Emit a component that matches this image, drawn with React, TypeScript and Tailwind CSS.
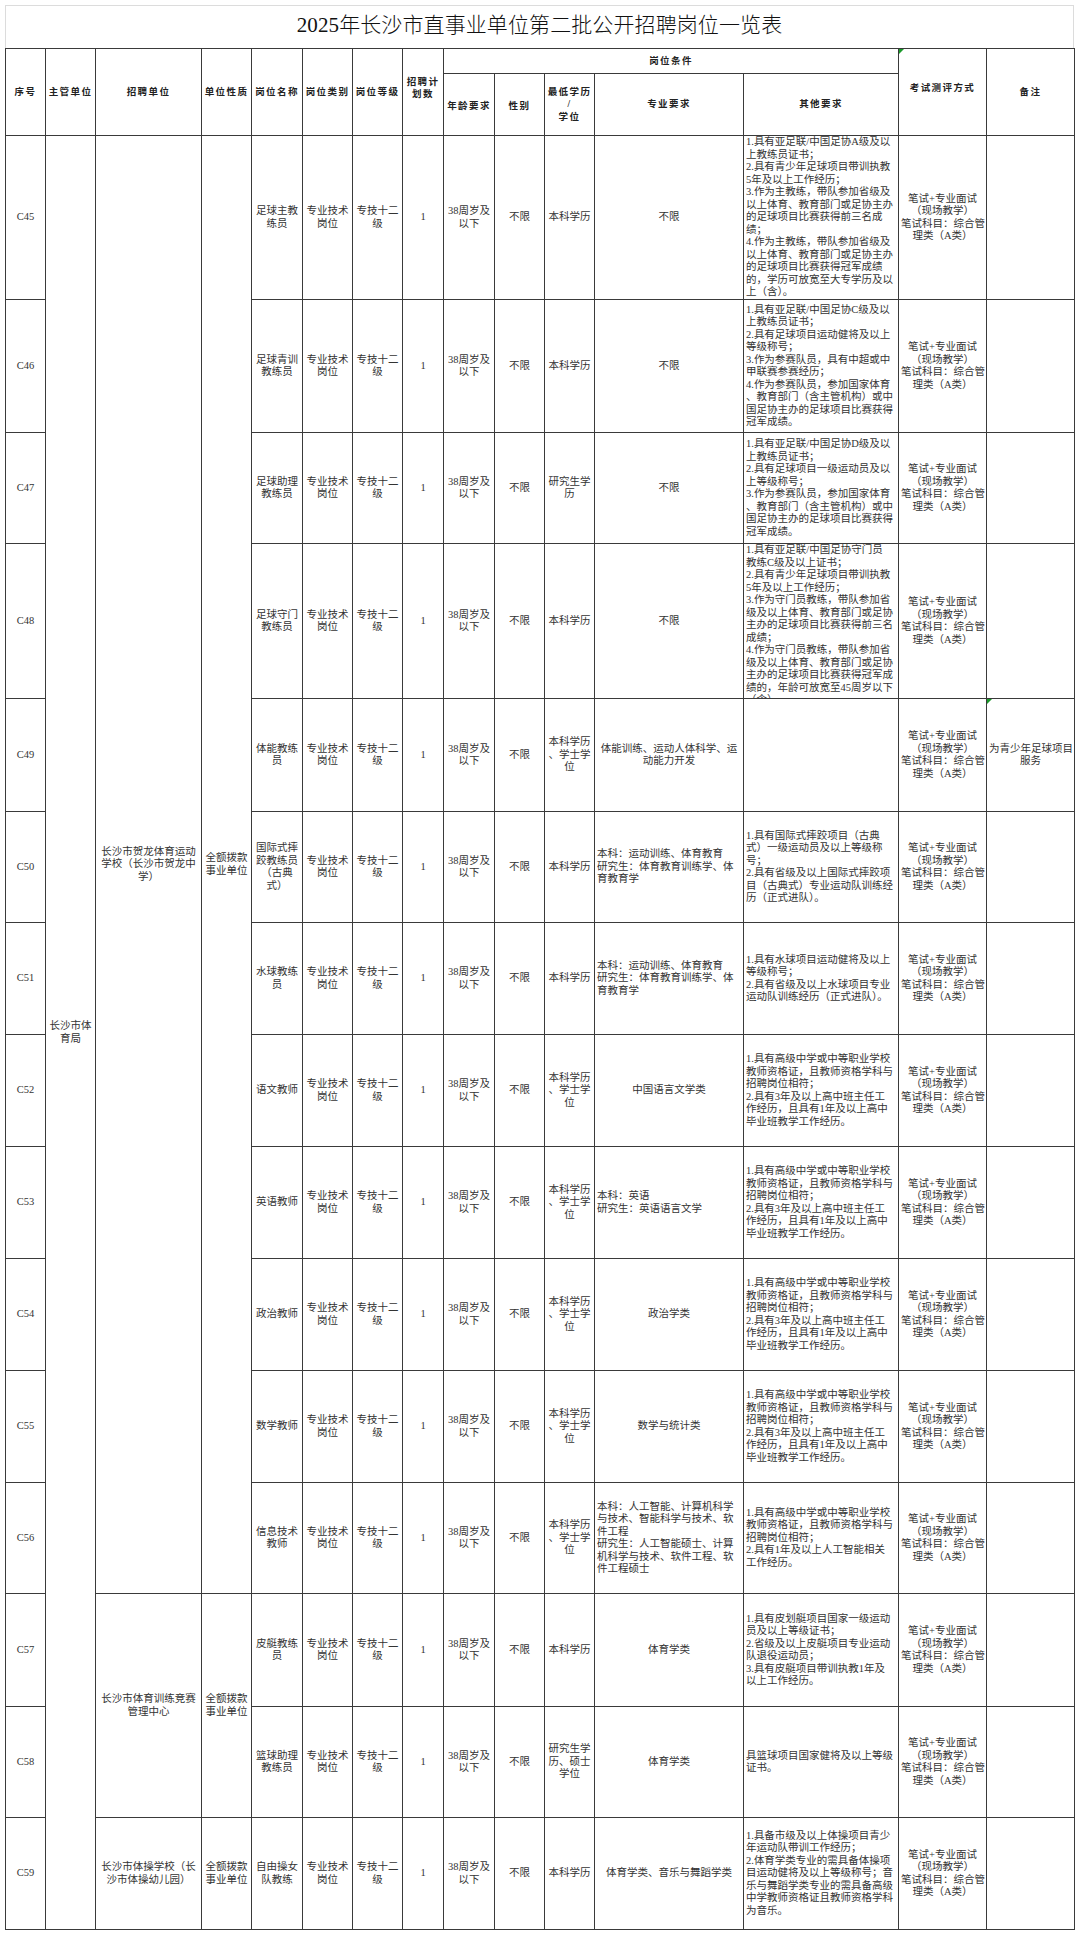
const stdOther = [
  "1.具有高级中学或中等职业学校",
  "教师资格证，且教师资格学科与",
  "招聘岗位相符；",
  "2.具有3年及以上高中班主任工",
  "作经历，且具有1年及以上高中",
  "毕业班教学工作经历。",
];

const sportMajor = "本科：运动训练、体育教育\n研究生：体育教育训练学、体\n育教育学";

type Row = {
  id: string;
  h: string;
  name: string;
  edu: string;
  major: string;
  majorLeft?: boolean;
  other: string[];
  note?: string;
  flag?: boolean;
};

const rows: Row[] = [
  {
    id: "C45",
    h: "h-[163px]",
    name: "足球主教\n练员",
    edu: "本科学历",
    major: "不限",
    other: [
      "1.具有亚足联/中国足协A级及以",
      "上教练员证书；",
      "2.具有青少年足球项目带训执教",
      "5年及以上工作经历；",
      "3.作为主教练，带队参加省级及",
      "以上体育、教育部门或足协主办",
      "的足球项目比赛获得前三名成",
      "绩；",
      "4.作为主教练，带队参加省级及",
      "以上体育、教育部门或足协主办",
      "的足球项目比赛获得冠军成绩",
      "的，学历可放宽至大专学历及以",
      "上（含）。",
    ],
  },
  {
    id: "C46",
    h: "h-[132px]",
    name: "足球青训\n教练员",
    edu: "本科学历",
    major: "不限",
    other: [
      "1.具有亚足联/中国足协C级及以",
      "上教练员证书；",
      "2.具有足球项目运动健将及以上",
      "等级称号；",
      "3.作为参赛队员，具有中超或中",
      "甲联赛参赛经历；",
      "4.作为参赛队员，参加国家体育",
      "、教育部门（含主管机构）或中",
      "国足协主办的足球项目比赛获得",
      "冠军成绩。",
    ],
  },
  {
    id: "C47",
    h: "h-[110px]",
    name: "足球助理\n教练员",
    edu: "研究生学\n历",
    major: "不限",
    other: [
      "1.具有亚足联/中国足协D级及以",
      "上教练员证书；",
      "2.具有足球项目一级运动员及以",
      "上等级称号；",
      "3.作为参赛队员，参加国家体育",
      "、教育部门（含主管机构）或中",
      "国足协主办的足球项目比赛获得",
      "冠军成绩。",
    ],
  },
  {
    id: "C48",
    h: "h-[154px]",
    name: "足球守门\n教练员",
    edu: "本科学历",
    major: "不限",
    other: [
      "1.具有亚足联/中国足协守门员",
      "教练C级及以上证书；",
      "2.具有青少年足球项目带训执教",
      "5年及以上工作经历；",
      "3.作为守门员教练，带队参加省",
      "级及以上体育、教育部门或足协",
      "主办的足球项目比赛获得前三名",
      "成绩；",
      "4.作为守门员教练，带队参加省",
      "级及以上体育、教育部门或足协",
      "主办的足球项目比赛获得冠军成",
      "绩的，年龄可放宽至45周岁以下",
      "（含）。",
    ],
  },
  {
    id: "C49",
    h: "h-[112px]",
    name: "体能教练\n员",
    edu: "本科学历\n、学士学\n位",
    major: "体能训练、运动人体科学、运\n动能力开发",
    other: [],
    note: "为青少年足球项目\n服务",
    flag: true,
  },
  {
    id: "C50",
    h: "h-[110px]",
    name: "国际式摔\n跤教练员\n（古典\n式）",
    edu: "本科学历",
    major: sportMajor,
    majorLeft: true,
    other: [
      "1.具有国际式摔跤项目（古典",
      "式）一级运动员及以上等级称",
      "号；",
      "2.具有省级及以上国际式摔跤项",
      "目（古典式）专业运动队训练经",
      "历（正式进队）。",
    ],
  },
  {
    id: "C51",
    h: "h-[111px]",
    name: "水球教练\n员",
    edu: "本科学历",
    major: sportMajor,
    majorLeft: true,
    other: [
      "1.具有水球项目运动健将及以上",
      "等级称号；",
      "2.具有省级及以上水球项目专业",
      "运动队训练经历（正式进队）。",
    ],
  },
  {
    id: "C52",
    h: "h-[111px]",
    name: "语文教师",
    edu: "本科学历\n、学士学\n位",
    major: "中国语言文学类",
    other: stdOther,
  },
  {
    id: "C53",
    h: "h-[111px]",
    name: "英语教师",
    edu: "本科学历\n、学士学\n位",
    major: "本科：英语\n研究生：英语语言文学",
    majorLeft: true,
    other: stdOther,
  },
  {
    id: "C54",
    h: "h-[111px]",
    name: "政治教师",
    edu: "本科学历\n、学士学\n位",
    major: "政治学类",
    other: stdOther,
  },
  {
    id: "C55",
    h: "h-[111px]",
    name: "数学教师",
    edu: "本科学历\n、学士学\n位",
    major: "数学与统计类",
    other: stdOther,
  },
  {
    id: "C56",
    h: "h-[110px]",
    name: "信息技术\n教师",
    edu: "本科学历\n、学士学\n位",
    major:
      "本科：人工智能、计算机科学\n与技术、智能科学与技术、软\n件工程\n研究生：人工智能硕士、计算\n机科学与技术、软件工程、软\n件工程硕士",
    majorLeft: true,
    other: [
      "1.具有高级中学或中等职业学校",
      "教师资格证，且教师资格学科与",
      "招聘岗位相符；",
      "2.具有1年及以上人工智能相关",
      "工作经历。",
    ],
  },
  {
    id: "C57",
    h: "h-[112px]",
    name: "皮艇教练\n员",
    edu: "本科学历",
    major: "体育学类",
    other: [
      "1.具有皮划艇项目国家一级运动",
      "员及以上等级证书；",
      "2.省级及以上皮艇项目专业运动",
      "队退役运动员；",
      "3.具有皮艇项目带训执教1年及",
      "以上工作经历。",
    ],
  },
  {
    id: "C58",
    h: "h-[110px]",
    name: "篮球助理\n教练员",
    edu: "研究生学\n历、硕士\n学位",
    major: "体育学类",
    other: ["具篮球项目国家健将及以上等级", "证书。"],
  },
  {
    id: "C59",
    h: "h-[111px]",
    name: "自由操女\n队教练",
    edu: "本科学历",
    major: "体育学类、音乐与舞蹈学类",
    other: [
      "1.具备市级及以上体操项目青少",
      "年运动队带训工作经历；",
      "2.体育学类专业的需具备体操项",
      "目运动健将及以上等级称号；音",
      "乐与舞蹈学类专业的需具备高级",
      "中学教师资格证且教师资格学科",
      "为音乐。",
    ],
  },
];

const units: Record<number, { span: number; name: string }> = {
  0: { span: 12, name: "长沙市贺龙体育运动\n学校（长沙市贺龙中\n学）" },
  12: { span: 2, name: "长沙市体育训练竞赛\n管理中心" },
  14: { span: 1, name: "长沙市体操学校（长\n沙市体操幼儿园）" },
};

const td = "border border-[#3a3a3a] p-0 align-middle";
const th =
  "border border-[#3a3a3a] p-0 align-middle text-center font-semibold text-[9.5px] tracking-[1.4px] text-[#222] whitespace-pre";

function Cell({ h, text, left }: { h: string; text: string; left?: boolean }) {
  return (
    <td className={td}>
      <div className={`${h} flex flex-col overflow-hidden px-[2px]`}>
        <div className={`my-auto whitespace-pre ${left ? "text-left" : "text-center"}`}>{text}</div>
      </div>
    </td>
  );
}

function Flag() {
  return (
    <span className="absolute left-0 top-0 h-0 w-0 border-t-[5px] border-r-[5px] border-t-[#1a9a2a] border-r-transparent" />
  );
}

export default function App() {
  return (
    <div className="min-h-[1935px] w-[1080px] bg-white pl-[5px] pt-[5px] font-['Liberation_Serif','Noto_Sans_CJK_SC',serif] text-[#333]">
      <div className="flex h-[43px] w-[1069px] items-center justify-center border border-b-0 border-[#dcdcdc] pb-[2px] text-[21px] font-light tracking-[0.1px] text-[#111]">
        2025年长沙市直事业单位第二批公开招聘岗位一览表
      </div>
      <table className="w-[1069px] table-fixed border-collapse text-[10.5px] leading-[12.5px]">
        <colgroup>
          <col className="w-[40px]" />
          <col className="w-[50px]" />
          <col className="w-[106px]" />
          <col className="w-[50px]" />
          <col className="w-[51px]" />
          <col className="w-[50px]" />
          <col className="w-[50px]" />
          <col className="w-[41px]" />
          <col className="w-[51px]" />
          <col className="w-[50px]" />
          <col className="w-[50px]" />
          <col className="w-[149px]" />
          <col className="w-[155px]" />
          <col className="w-[88px]" />
          <col className="w-[88px]" />
        </colgroup>
        <thead>
          <tr>
            <th rowSpan={2} className={th}>序号</th>
            <th rowSpan={2} className={th}>主管单位</th>
            <th rowSpan={2} className={th}>招聘单位</th>
            <th rowSpan={2} className={th}>单位性质</th>
            <th rowSpan={2} className={th}>岗位名称</th>
            <th rowSpan={2} className={th}>岗位类别</th>
            <th rowSpan={2} className={th}>岗位等级</th>
            <th rowSpan={2} className={th}>
              <div className="pb-[8px]">{"招聘计\n划数"}</div>
            </th>
            <th colSpan={5} className={th}>
              <div className="flex h-[24px] items-center justify-center">岗位条件</div>
            </th>
            <th rowSpan={2} className={`${th} relative`}>
              <Flag />
              <div className="pb-[8px]">考试测评方式</div>
            </th>
            <th rowSpan={2} className={th}>备注</th>
          </tr>
          <tr>
            <th className={th}>
              <div className="flex h-[61px] items-center justify-center pt-[4px]">年龄要求</div>
            </th>
            <th className={th}>
              <div className="pt-[4px]">性别</div>
            </th>
            <th className={th}>{"最低学历\n/\n学位"}</th>
            <th className={th}>专业要求</th>
            <th className={th}>其他要求</th>
          </tr>
        </thead>
        <tbody>
          {rows.map((r, i) => (
            <tr key={r.id}>
              <Cell h={r.h} text={r.id} />
              {i === 0 && (
                <td rowSpan={15} className={`${td} whitespace-pre text-center`}>
                  {"长沙市体\n育局"}
                </td>
              )}
              {units[i] && (
                <>
                  <td rowSpan={units[i].span} className={`${td} whitespace-pre px-[2px] text-center`}>
                    {units[i].name}
                  </td>
                  <td rowSpan={units[i].span} className={`${td} whitespace-pre text-center`}>
                    {"全额拨款\n事业单位"}
                  </td>
                </>
              )}
              <Cell h={r.h} text={r.name} />
              <Cell h={r.h} text={"专业技术\n岗位"} />
              <Cell h={r.h} text={"专技十二\n级"} />
              <Cell h={r.h} text="1" />
              <Cell h={r.h} text={"38周岁及\n以下"} />
              <Cell h={r.h} text="不限" />
              <Cell h={r.h} text={r.edu} />
              <Cell h={r.h} text={r.major} left={r.majorLeft} />
              <Cell h={r.h} text={r.other.join("\n")} left />
              <Cell h={r.h} text={"笔试+专业面试\n（现场教学）\n笔试科目：综合管\n理类（A类）"} />
              <td className={`${td} relative`}>
                {r.flag && <Flag />}
                <div className={`${r.h} flex flex-col overflow-hidden px-[2px]`}>
                  <div className="my-auto whitespace-pre text-center">{r.note ?? ""}</div>
                </div>
              </td>
            </tr>
          ))}
        </tbody>
      </table>
    </div>
  );
}
